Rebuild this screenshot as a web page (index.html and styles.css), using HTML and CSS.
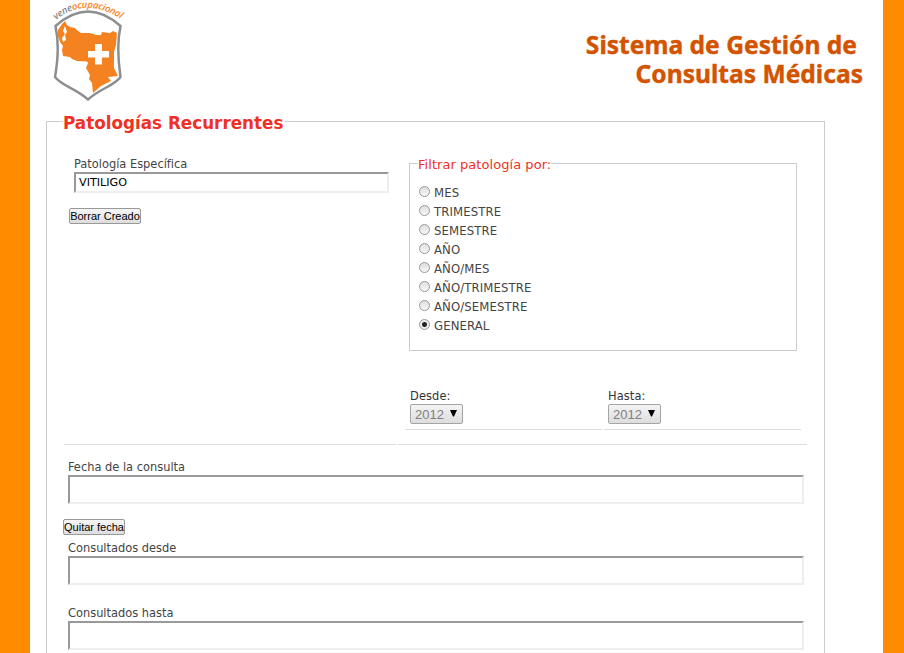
FILE: index.html
```html
<!DOCTYPE html>
<html lang="es">
<head>
<meta charset="utf-8">
<title>Sistema de Gestión de Consultas Médicas</title>
<link rel="stylesheet" href="styles.css">
</head>
<body>
<div class="page">
  <header class="header">
    <svg class="logo" width="80" height="104" viewBox="0 0 80 104">
      <defs><path id="arc" d="M6 20Q36-5 74 21"/></defs>
      <text class="logo-text"><textPath href="#arc" textLength="70"><tspan class="grey">vene</tspan>ocupacional</textPath></text>
      <path class="shield" d="M5.500 26Q38-3 70.500 26C67 42 68 60 70.500 77C64 86 51 88 38 99.500C25 88 12 86 5 77C8 60 9 42 5.500 26Z"/>
      <path class="map" d="M15 21L12 24L8 30L8 36L10 42L13 46L12 50L13 56L20 57L22 59L27 61L37 61.500L38 63L36 68L40 75L39 79L42 83L43 93L51 86L61 81L58 77L68 76L64 68V52L66 45L67 33L63 31L60 33L52 32L51 35L46 35L40 33H31L28 31L25 28L20 27L17 25Z"/>
      <path class="lake" d="M15 26L13 31L15 34L12 38L13 42L16 40L15 35L17 32Z"/>
      <path class="cross" d="M45 44h7v7h7v6.500h-7v7h-7v-7h-7v-6.500h7z"/>
    </svg>
    <h1 class="title"><span class="t1">Sistema de Gestión de</span><span class="t2">Consultas Médicas</span></h1>
  </header>
  <fieldset class="main">
    <legend class="main-legend">Patologías Recurrentes</legend>
    <div class="row">
      <div class="left">
        <label class="label" for="pat">Patología Específica</label>
        <input class="field small" id="pat" type="text" value="VITILIGO">
        <button class="btn" type="button">Borrar Creado</button>
      </div>
      <div class="right">
        <fieldset class="filter">
          <legend class="filter-legend">Filtrar patología por:</legend>
          <label class="option"><input type="radio" name="f">MES</label>
          <label class="option"><input type="radio" name="f">TRIMESTRE</label>
          <label class="option"><input type="radio" name="f">SEMESTRE</label>
          <label class="option"><input type="radio" name="f">AÑO</label>
          <label class="option"><input type="radio" name="f">AÑO/MES</label>
          <label class="option"><input type="radio" name="f">AÑO/TRIMESTRE</label>
          <label class="option"><input type="radio" name="f">AÑO/SEMESTRE</label>
          <label class="option"><input type="radio" name="f" checked>GENERAL</label>
        </fieldset>
        <div class="years">
          <div class="year"><span class="label dark">Desde:</span><div class="select">2012<svg width="7" height="7"><path d="M0 0h7L4 6.500h-1z"/></svg></div></div>
          <div class="year"><span class="label dark">Hasta:</span><div class="select">2012<svg width="7" height="7"><path d="M0 0h7L4 6.500h-1z"/></svg></div></div>
        </div>
      </div>
    </div>
    <div class="dates">
      <label class="label" for="fecha">Fecha de la consulta</label>
      <input class="field" id="fecha" type="text">
      <button class="btn clear" type="button">Quitar fecha</button>
      <label class="label" for="desde">Consultados desde</label>
      <input class="field" id="desde" type="text">
      <label class="label last" for="hasta">Consultados hasta</label>
      <input class="field" id="hasta" type="text">
    </div>
  </fieldset>
</div>
</body>
</html>
```
FILE: styles.css
```css
* { box-sizing: border-box; }
html { overflow: hidden; background: #ff8c00; }
body { margin: 0; height: 653px; overflow: hidden; font-family: "DejaVu Sans Condensed", "DejaVu Sans", sans-serif; font-stretch: condensed; font-size: 12.7px; color: #444; }
.page { margin-left: 30px; width: 853px; height: 653px; overflow: hidden; background: #fff; }
.header { display: flex; justify-content: space-between; height: 111px; padding: 0 20px 0 20px; }
.logo { display: block; overflow: visible; }
.logo-text { font: italic 600 9.5px "Open Sans", sans-serif; fill: #f58220; }
.logo-text .grey { fill: #888; }
.shield { fill: #fff; stroke: #8c8e90; stroke-width: 2.500; stroke-linejoin: round; }
.map { fill: #f58220; }
.lake, .cross { fill: #fff; }
.title { margin: 30px 0 0; font: bold 24.6px/29px "Noto Sans", sans-serif; color: #d35400; white-space: nowrap; text-align: right; -webkit-text-stroke: .4px #d35400; }
.title span { display: block; }
.t1 { padding-right: 6px; }
fieldset { margin: 0; padding: 0; border: 1px solid #ccc; min-width: 0; }
legend { padding: 0; }
.main { margin-left: 16px; width: 779px; height: 600px; padding: 0 17px 0 16px; }
.main-legend { width: 222px; height: 21px; font: bold 16.8px/24px "DejaVu Sans", sans-serif; white-space: nowrap; color: #ee3124; }
.row { display: flex; gap: 2px; margin-left: 1px; height: 313px; }
.left, .right { border-bottom: 1px solid #ddd; }
.left { width: 332px; padding: 24px 0 0 10px; }
.right { width: 409px; padding: 24px 0 0 7px; }
.label { display: block; height: 16px; line-height: 16px; white-space: nowrap; }
.dark { color: #333; letter-spacing: .1px; }
.field { display: block; width: 736px; height: 29px; padding: 0 3px; border: 2px solid; border-color: #999 #eee #eee #999; border-radius: 0; background: #fff; font: 11.2px "DejaVu Sans", sans-serif; color: #000; outline: 0; }
.small { width: 315px; height: 21px; }
.btn { display: block; width: 72px; height: 16px; margin: 15px 0 0 -5px; padding: 0; border: 1px solid #999; border-radius: 2px; background: linear-gradient(#f6f6f6, #ddd); font: 11px/14px "Liberation Sans", sans-serif; color: #000; white-space: nowrap; }
.filter { width: 388px; height: 196px; margin: -1px 0 0 4px; padding: 0 8px; }
.filter-legend { height: 16px; font: 13px/19px "DejaVu Sans", sans-serif; letter-spacing: .05px; color: #ee3124; }
.option { display: flex; align-items: center; height: 19px; line-height: 19px; font-size: 13px; letter-spacing: .1px; }
.filter-legend + .option { margin-top: 12px; }
.option input { appearance: none; width: 11px; height: 11px; margin: -2px 4px 0 1px; border: 1px solid #999; border-radius: 50%; background: linear-gradient(#ddd, #f8f8f8); }
.option input:checked { background: radial-gradient(circle, #222 0 2px, #eee 3px); }
.years { display: flex; gap: 2px; margin-top: 32px; }
.year { width: 197px; height: 47px; padding: 4px 0 0 5px; border-bottom: 1px solid #ddd; }
.year:last-child { padding-left: 4px; }
.year .label { height: 17px; line-height: 18px; }
.select { display: flex; align-items: center; gap: 6px; width: 53px; height: 20px; padding-left: 4px; border: 1px solid #a5a5a5; border-radius: 2px; background: linear-gradient(#f4f4f4, #ddd); font: 13px "Liberation Sans", sans-serif; color: #808080; }
.select svg { flex: none; margin-top: -1px; fill: #000; }
.dates { padding: 14px 0 0 5px; }
.clear { width: 62px; }
.clear + .label { margin-top: 5px; }
.last { margin-top: 20px; }
```
